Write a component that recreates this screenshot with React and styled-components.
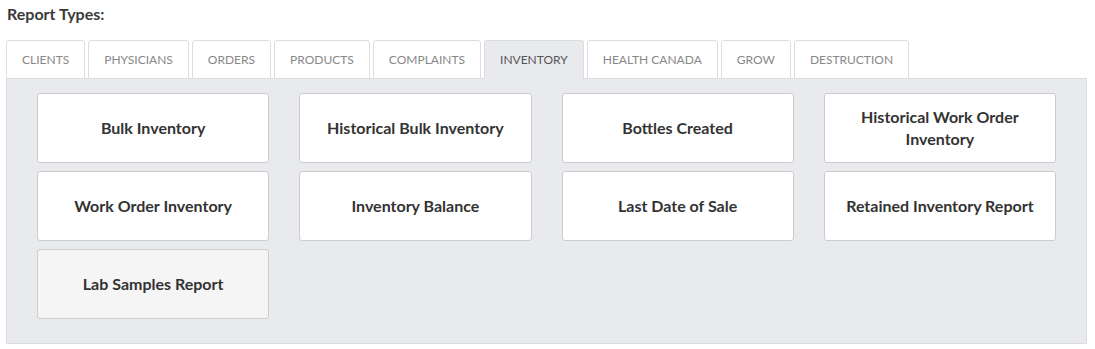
import React from 'react';
import styled, { createGlobalStyle } from 'styled-components';

const GlobalStyle = createGlobalStyle`
    body {
        margin: 0;
        font-family: Lato, "Noto Sans", sans-serif;
        background: #fff;
    }
`

const Page = styled.div`
    padding: 5px 8px 0 6px;
`

const Title = styled.h4`
    margin: 0 0 17px 1px;
    font-size: 16px;
    font-weight: 700;
    color: #3a3a3a;
    line-height: 18px;
`

const TabBar = styled.ul`
    display: flex;
    gap: 3px;
    margin: 0;
    padding: 0;
    list-style: none;
    position: relative;
    z-index: 1;
`

const Tab = styled.li`
    height: 37px;
    padding: 0 15px;
    display: flex;
    align-items: center;
    font-size: 12px;
    text-transform: uppercase;
    color: ${p => (p.$active ? '#555' : '#888')};
    background: ${p => (p.$active ? '#e9eaee' : '#fff')};
    border: 1px solid #ddd;
    border-bottom: 1px solid ${p => (p.$active ? '#e9eaee' : '#ddd')};
    border-radius: 3px 3px 0 0;
    cursor: pointer;
`

const Panel = styled.div`
    margin-top: -1px;
    background: #e9eaee;
    border: 1px solid #ddd;
    padding: 14px 30px 24px;
    display: grid;
    grid-template-columns: repeat(4, 1fr);
    gap: 8px 30px;
`

const Card = styled.button`
    height: 70px;
    padding: 0 20px;
    background: ${p => (p.$hover ? '#f5f5f5' : '#fff')};
    border: 1px solid #ccc;
    border-radius: 3px;
    font-family: Lato, "Noto Sans", sans-serif;
    font-size: 16px;
    font-weight: 700;
    line-height: 22px;
    color: #333;
    cursor: pointer;
`

const tabs = ['Clients', 'Physicians', 'Orders', 'Products', 'Complaints', 'Inventory', 'Health Canada', 'Grow', 'Destruction'];

const reports = [
    'Bulk Inventory',
    'Historical Bulk Inventory',
    'Bottles Created',
    'Historical Work Order Inventory',
    'Work Order Inventory',
    'Inventory Balance',
    'Last Date of Sale',
    'Retained Inventory Report',
    'Lab Samples Report',
];

const App = () => {
    return (
        <Page>
            <GlobalStyle />
            <Title>Report Types:</Title>
            <TabBar>
                {tabs.map(t => (
                    <Tab key={t} $active={t === 'Inventory'}>{t}</Tab>
                ))}
            </TabBar>
            <Panel>
                {reports.map(r => (
                    <Card key={r} $hover={r === 'Lab Samples Report'}>{r}</Card>
                ))}
            </Panel>
        </Page>
    )
}

export default App;
